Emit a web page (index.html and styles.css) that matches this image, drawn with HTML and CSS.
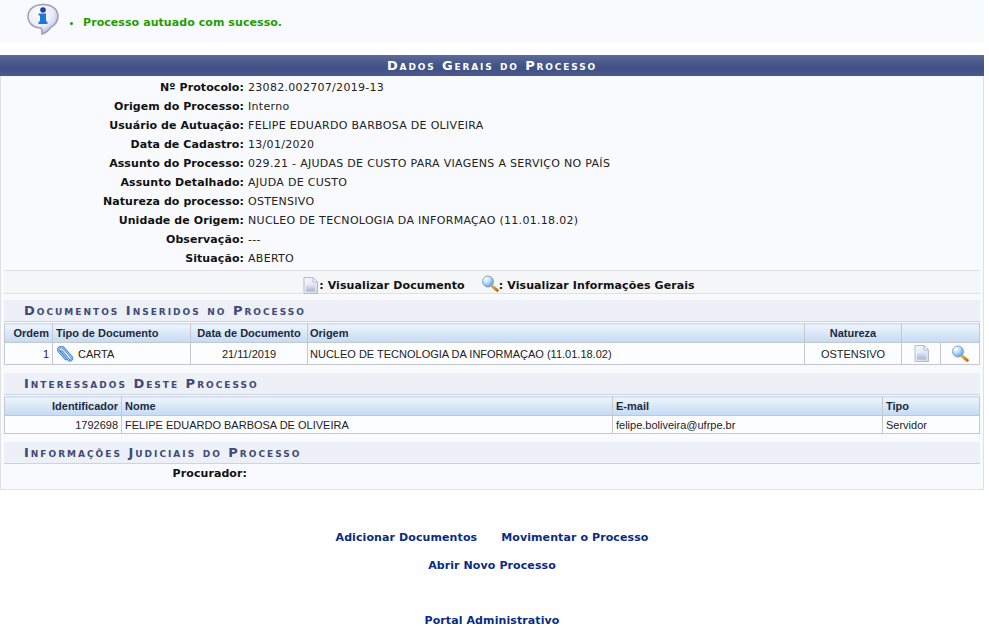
FILE: index.html
```html
<!DOCTYPE html>
<html lang="pt-BR">
<head>
<meta charset="utf-8">
<title>Dados Gerais do Processo</title>
<link rel="stylesheet" href="styles.css">
</head>
<body>
<div class="page">
  <svg width="0" height="0" class="defs" aria-hidden="true">
    <defs>
      <linearGradient id="docFill" x1="0" y1="0" x2="1" y2="1"><stop offset="0" stop-color="#f8f9fd"/><stop offset="1" stop-color="#d3d9ea"/></linearGradient>
      <linearGradient id="docBand" x1="0" y1="0" x2="0" y2="1"><stop offset="0" stop-color="#dfe4f1"/><stop offset="1" stop-color="#a9b4d2"/></linearGradient>
      <linearGradient id="handle" x1="0" y1="0" x2="1" y2="1"><stop offset="0" stop-color="#e8b04a"/><stop offset="1" stop-color="#b9701c"/></linearGradient>
      <radialGradient id="lens" cx=".32" cy=".28" r=".75"><stop offset="0" stop-color="#fff"/><stop offset=".45" stop-color="#bfe0f8"/><stop offset="1" stop-color="#5f9fe0"/></radialGradient>
      <radialGradient id="bubble" cx=".38" cy=".28" r=".8"><stop offset="0" stop-color="#fff"/><stop offset=".6" stop-color="#e6e9f8"/><stop offset="1" stop-color="#a4a9cc"/></radialGradient>
      <symbol id="doc" viewBox="0 0 15 17">
        <path d="M1 .5H10L14.500 5V16.500H1Z" fill="url(#docFill)" stroke="#b4bccf"/>
        <path d="M10 .5V5H14.500Z" fill="#fff" stroke="#b4bccf"/>
        <rect x="3" y="8" width="9" height="6.500" fill="url(#docBand)"/>
      </symbol>
      <symbol id="zoom" viewBox="0 0 18 17">
        <path d="M11 11L16.300 15.300" stroke="url(#handle)" stroke-width="3" stroke-linecap="round"/>
        <circle cx="7" cy="6.500" r="5.500" fill="url(#lens)" stroke="#8aa6c6"/>
      </symbol>
    </defs>
  </svg>

  <div class="message">
    <svg class="info-icon" width="34" height="36" viewBox="0 0 34 36" aria-hidden="true">
      <path d="M17 1.500C8 1.500 2 6.500 2 13.500S8 25 15 25C16 27 16.500 29 16 31C20 30 23 27 25 24C29 22.500 32 18 32 13C32 6.500 26 1.500 17 1.500Z" fill="url(#bubble)" stroke="#9a9dbb" stroke-width="1.500"/>
      <circle cx="17" cy="7" r="2.800" fill="#1b3f9c"/>
      <path d="M12.500 10.500H20V18.500H21.500V21H12.500V18.500H14V12.500H12.500Z" fill="#1a78d8"/>
    </svg>
    <ul class="message-list"><li>Processo autuado com sucesso.</li></ul>
  </div>

  <div class="panel">
    <h2 class="panel-title">Dados Gerais do Processo</h2>
    <dl class="details">
      <div class="detail"><dt>Nº Protocolo:</dt><dd>23082.002707/2019-13</dd></div>
      <div class="detail"><dt>Origem do Processo:</dt><dd>Interno</dd></div>
      <div class="detail"><dt>Usuário de Autuação:</dt><dd>FELIPE EDUARDO BARBOSA DE OLIVEIRA</dd></div>
      <div class="detail"><dt>Data de Cadastro:</dt><dd>13/01/2020</dd></div>
      <div class="detail"><dt>Assunto do Processo:</dt><dd>029.21 - AJUDAS DE CUSTO PARA VIAGENS A SERVIÇO NO PAÍS</dd></div>
      <div class="detail"><dt>Assunto Detalhado:</dt><dd>AJUDA DE CUSTO</dd></div>
      <div class="detail"><dt>Natureza do processo:</dt><dd>OSTENSIVO</dd></div>
      <div class="detail"><dt>Unidade de Origem:</dt><dd>NUCLEO DE TECNOLOGIA DA INFORMAÇAO (11.01.18.02)</dd></div>
      <div class="detail"><dt>Observação:</dt><dd>---</dd></div>
      <div class="detail"><dt>Situação:</dt><dd>ABERTO</dd></div>
    </dl>

    <div class="legend">
      <svg class="legend-doc" width="15" height="17" aria-hidden="true"><use href="#doc"/></svg><span class="legend-text">: Visualizar Documento</span>
      <svg class="legend-zoom" width="18" height="17" aria-hidden="true"><use href="#zoom"/></svg><span>: Visualizar Informações Gerais</span>
    </div>

    <h3 class="subtitle">Documentos Inseridos no Processo</h3>
    <table class="grid grid-docs">
      <colgroup><col class="c-ordem"><col class="c-tipo"><col class="c-data"><col><col class="c-nat"><col class="c-ic"><col class="c-ic2"></colgroup>
      <thead>
        <tr><th class="right">Ordem</th><th>Tipo de Documento</th><th class="center">Data de Documento</th><th class="tight">Origem</th><th class="center">Natureza</th><th colspan="2"></th></tr>
      </thead>
      <tbody>
        <tr>
          <td class="right">1</td>
          <td><span class="clip-cell"><svg width="18" height="16" viewBox="0 0 18 16" aria-hidden="true"><path class="clip-out" d="M5.500 5L12.500 13.500C14.500 15.500 17 13 15.500 11L7.500 2C5 -.5 .5 2.500 3 5.500L10 13"/><path class="clip-in" d="M5.500 5L12.500 13.500C14.500 15.500 17 13 15.500 11L7.500 2C5 -.5 .5 2.500 3 5.500L10 13"/></svg><span>CARTA</span></span></td>
          <td class="center">21/11/2019</td>
          <td class="tight">NUCLEO DE TECNOLOGIA DA INFORMAÇAO (11.01.18.02)</td>
          <td class="center">OSTENSIVO</td>
          <td class="center"><svg class="cell-icon" width="15" height="17" aria-hidden="true"><use href="#doc"/></svg></td>
          <td class="center"><svg class="cell-icon" width="18" height="17" aria-hidden="true"><use href="#zoom"/></svg></td>
        </tr>
      </tbody>
    </table>

    <h3 class="subtitle">Interessados Deste Processo</h3>
    <table class="grid grid-people">
      <colgroup><col class="c-id"><col><col class="c-mail"><col class="c-tipo2"></colgroup>
      <thead>
        <tr><th class="right">Identificador</th><th>Nome</th><th>E-mail</th><th>Tipo</th></tr>
      </thead>
      <tbody>
        <tr><td class="right">1792698</td><td>FELIPE EDUARDO BARBOSA DE OLIVEIRA</td><td>felipe.boliveira@ufrpe.br</td><td>Servidor</td></tr>
      </tbody>
    </table>

    <h3 class="subtitle">Informações Judiciais do Processo</h3>
    <div class="detail attorney"><dt>Procurador:</dt><dd></dd></div>
  </div>

  <nav class="links">
    <div class="link-row"><a href="#">Adicionar Documentos</a><a href="#">Movimentar o Processo</a></div>
    <div class="link-row"><a href="#">Abrir Novo Processo</a></div>
    <div class="link-row portal"><a href="#">Portal Administrativo</a></div>
  </nav>
</div>
</body>
</html>
```

FILE: styles.css
```css
html, body { margin: 0; padding: 0; background: #fff; }
body { font-family: "DejaVu Sans", Verdana, sans-serif; font-size: 11px; color: #222; overflow: hidden; }
.page { width: 984px; }
.defs { position: absolute; }

.message { height: 42px; background: #f9fafd; display: flex; box-sizing: border-box; padding-left: 26px; }
.info-icon { margin-top: 3px; flex: none; }
.message-list { margin: 16px 0 0; padding: 0 0 0 23px; color: #1f9e00; font-weight: bold; font-size: 11px; line-height: 14px; letter-spacing: .07px; }

.panel { margin-top: 13px; background: #f9fafd; border-bottom: 1px solid #dfe1e5; border-left: 1px solid #dfe1e5; border-right: 1px solid #dfe1e5; padding-bottom: 6px; }
.panel-title { margin: 0 -1px 2px; height: 21px; line-height: 21px; text-align: center; color: #fff; font-size: 13px; font-weight: bold; font-variant: small-caps; letter-spacing: 1.85px; background: linear-gradient(#5b6b9b, #404f84 60%, #4a5a8c); }

.details { margin: 0; }
.detail { display: flex; height: 19px; line-height: 19px; }
.detail dt { width: 243px; text-align: right; font-weight: bold; color: #111; flex: none; letter-spacing: .08px; }
.detail dd { margin: 0 0 0 4px; color: #222; letter-spacing: .3px; }

.legend { margin: 2px 3px 6px; height: 24px; box-sizing: border-box; border-top: 1px solid #dfe1e5; border-bottom: 1px solid #dfe1e5; background: #f5f6f8; display: flex; justify-content: center; align-items: center; font-weight: bold; color: #111; padding: 6px 0 0 14px; letter-spacing: .1px; }
.legend-doc { margin-right: 1px; }
.legend-text { margin-right: 16px; }
.legend-zoom { margin-top: -4px; }

.subtitle { margin: 0 3px; height: 22px; line-height: 21px; box-sizing: border-box; padding-left: 20px; background: #edf0f7; border-bottom: 1px solid #c8d4ea; color: #3f4a78; font-size: 13px; font-weight: bold; font-variant: small-caps; letter-spacing: 2px; }

.grid { width: 976px; margin: 1px 3px 8px; border-collapse: collapse; table-layout: fixed; font-family: "Liberation Sans", Arial, sans-serif; font-size: 11px; color: #222; background: #fcfdfe; }
.grid th { height: 18px; padding: 0 3px; text-align: left; font-weight: bold; color: #1c2a3c; background: linear-gradient(#eef4fc, #c4daf4); border: 1px solid #c4c8cc; border-top: 1px solid #d4dcec; }
.grid td { padding: 0 3px; border: 1px solid #c4c8cc; }
.grid-docs td { height: 21px; }
.grid-people td { height: 17px; }
.grid th.right, .grid td.right { text-align: right; }
.grid th.center, .grid td.center { text-align: center; }
.grid th.tight, .grid td.tight { padding-left: 2px; }

.c-ordem { width: 48px; }
.c-tipo { width: 138px; }
.c-data { width: 117px; }
.c-nat { width: 97px; }
.c-ic { width: 39px; }
.c-ic2 { width: 39px; }
.c-id { width: 117px; }
.c-mail { width: 270px; }
.c-tipo2 { width: 97px; }

.clip-cell { display: flex; align-items: center; gap: 4px; }
.clip-out, .clip-in { fill: none; stroke-linecap: round; }
.clip-out { stroke: #4f86cc; stroke-width: 2.6; }
.clip-in { stroke: #b5d2f2; stroke-width: 1; }
.cell-icon { vertical-align: middle; }

.attorney dt { width: 246px; }

.links { text-align: center; font-weight: bold; letter-spacing: .1px; }
.links a { color: #0a2c82; text-decoration: none; }
.link-row { height: 28px; line-height: 14px; }
.link-row a + a { margin-left: 24px; }
.links .link-row:first-child { margin-top: 41px; }
.portal { margin-top: 27px; }
```
